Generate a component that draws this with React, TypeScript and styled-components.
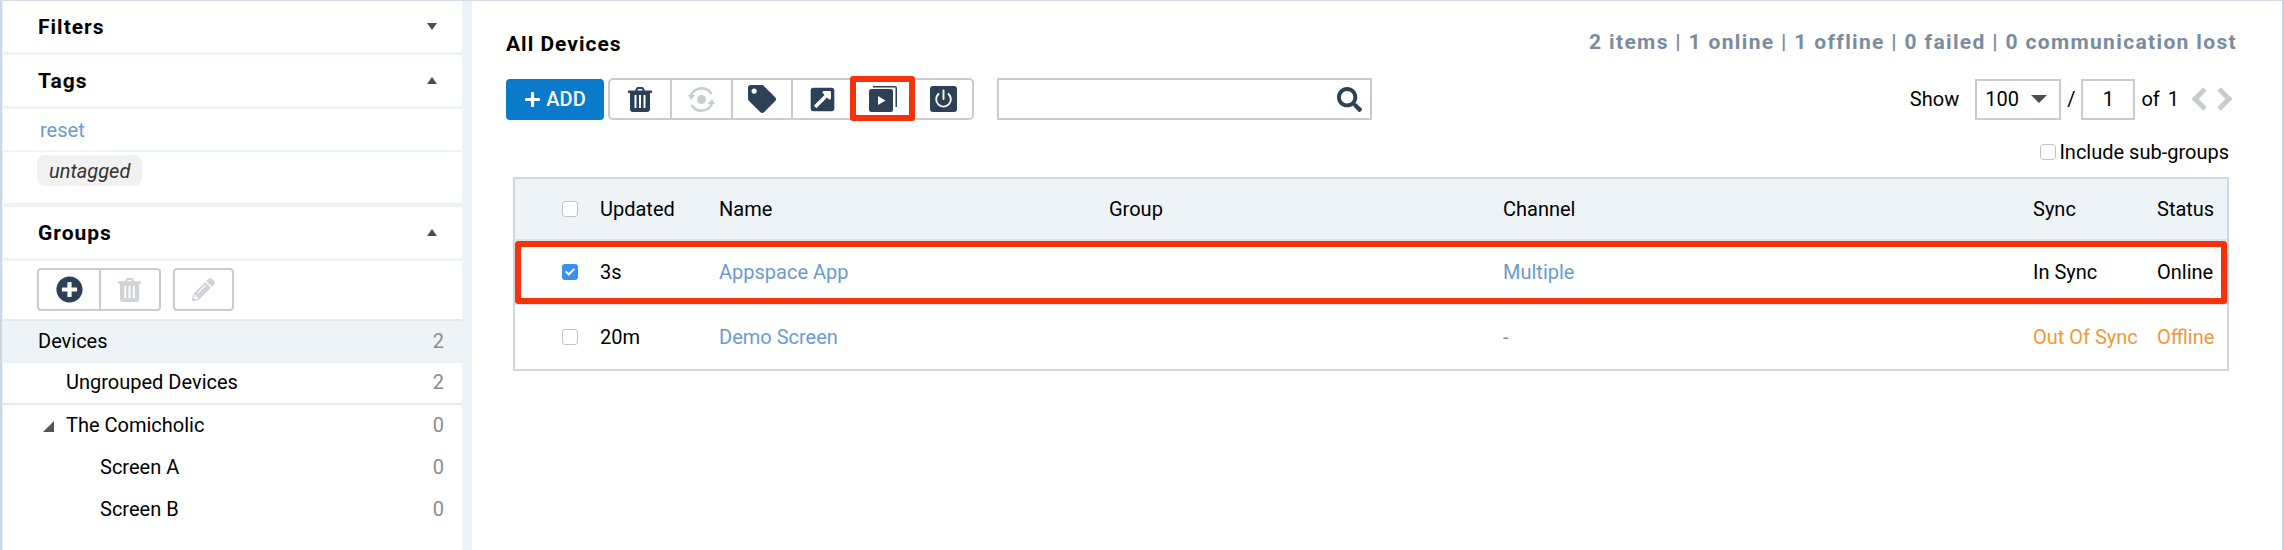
import {FaCheck, FaPlus, FaPlusCircle, FaPencilAlt, FaTag, FaSearch, FaExternalLinkSquareAlt} from "react-icons/fa";
import styled, {createGlobalStyle} from "styled-components";

const GlobalStyle = createGlobalStyle`
  html, body {
    margin: 0;
    background: #eef3f8;
    font-family: Roboto, "Liberation Sans", sans-serif;
    color: #000;
  }
  * {
    box-sizing: border-box;
  }
`;

const navy = "#2d4058";

const TrashIcon = ({size = 25, color = navy}: {size?: number; color?: string}) => (
  <svg width={size * 0.96} height={size} viewBox="0 0 24 25">
    <path
      fill={color}
      fillRule="evenodd"
      d="M8 1.5 Q8.3 0 10 0 H14 Q15.700 0 16 1.500 L16.800 3.500 H23 Q24 3.500 24 4.500 V6 H22 V22 Q22 25 19 25 H5 Q2 25 2 22 V6 H0 V4.500 Q0 3.500 1 3.500 H7.200 Z M9.500 3.500 H14.500 L14 2 H10 Z M6.500 8 H8.500 V21 H6.500 Z M11 8 H13 V21 H11 Z M15.500 8 H17.500 V21 H15.500 Z"
    />
  </svg>
);

const SyncIcon = () => (
  <svg width="27" height="27" viewBox="0 0 27 27" fill="none" stroke="#c9ccd1" strokeWidth="2.600">
    <circle cx="13.500" cy="13.500" r="4.500" fill="#c9ccd1" stroke="none" />
    <path d="M2.500 11 A11.500 11.500 0 0 1 23.500 8" />
    <path d="M24.500 16 A11.500 11.500 0 0 1 3.500 19" />
    <path d="M0 9 L7.500 9 L3 14 Z" fill="#c9ccd1" stroke="none" />
    <path d="M27 18 L19.500 18 L24 13 Z" fill="#c9ccd1" stroke="none" />
  </svg>
);

const PlayStackIcon = () => (
  <svg width="28" height="26" viewBox="0 0 28 26">
    <path d="M4 0 H26 Q28 0 28 2 V21 H26.500 V1.500 H4 Z" fill={navy} />
    <rect x="0" y="3" width="24" height="23" rx="2.500" fill={navy} />
    <path d="M9 10 L16.500 14.500 L9 19 Z" fill="#fff" />
  </svg>
);

const PowerIcon = () => (
  <svg width="27" height="26" viewBox="0 0 27 26">
    <rect width="27" height="26" rx="3" fill={navy} />
    <path d="M8.500 8 A7.300 7.300 0 1 0 18.500 8" fill="none" stroke="#fff" strokeWidth="1.900" strokeLinecap="round" />
    <path d="M13.500 4.500 V13" fill="none" stroke="#fff" strokeWidth="1.900" strokeLinecap="round" />
  </svg>
);

const Chevron = ({flip}: {flip?: boolean}) => (
  <svg width="17" height="24" viewBox="0 0 17 24" fill="none" stroke="#c8cbce" strokeWidth="5">
    <path d={flip ? "M3 2 L13 12 L3 22" : "M14 2 L4 12 L14 22"} />
  </svg>
);

export default function App(): JSX.Element {
  return (
    <>
      <GlobalStyle />
      <Page>
        <Sidebar>
          <SectionHeader>
            Filters
            <Caret />
          </SectionHeader>
          <SectionHeader>
            Tags
            <Caret open />
          </SectionHeader>
          <ResetRow>reset</ResetRow>
          <TagsRow>
            <TagChip>untagged</TagChip>
          </TagsRow>
          <SectionHeader>
            Groups
            <Caret open />
          </SectionHeader>
          <GroupTools>
            <ButtonGroup>
              <GroupButton>
                <FaPlusCircle size={27} color={navy} />
              </GroupButton>
              <GroupButton>
                <TrashIcon size={24} color="#cfd2d6" />
              </GroupButton>
            </ButtonGroup>
            <ButtonGroup>
              <GroupButton narrow>
                <FaPencilAlt size={23} color="#cfd2d6" />
              </GroupButton>
            </ButtonGroup>
          </GroupTools>
          <TreeRow indent={35} active>
            <span>Devices</span>
            <Count>2</Count>
          </TreeRow>
          <TreeRow indent={63} divided>
            <span>Ungrouped Devices</span>
            <Count>2</Count>
          </TreeRow>
          <TreeRow indent={40}>
            <span>
              <TreeToggle />
              The Comicholic
            </span>
            <Count>0</Count>
          </TreeRow>
          <TreeRow indent={97}>
            <span>Screen A</span>
            <Count>0</Count>
          </TreeRow>
          <TreeRow indent={97}>
            <span>Screen B</span>
            <Count>0</Count>
          </TreeRow>
        </Sidebar>

        <Main>
          <TitleRow>
            <Title>All Devices</Title>
            <Stats>2 items | 1 online | 1 offline | 0 failed | 0 communication lost</Stats>
          </TitleRow>
          <ToolRow>
            <AddButton>
              <FaPlus size={17} />
              ADD
            </AddButton>
            <Toolbar>
              <ToolButton>
                <TrashIcon />
              </ToolButton>
              <ToolButton>
                <SyncIcon />
              </ToolButton>
              <ToolButton>
                <FaTag size={28} color={navy} />
              </ToolButton>
              <ToolButton>
                <FaExternalLinkSquareAlt size={27} color={navy} />
              </ToolButton>
              <ToolButton highlighted>
                <PlayStackIcon />
              </ToolButton>
              <ToolButton>
                <PowerIcon />
              </ToolButton>
            </Toolbar>
            <SearchBox>
              <FaSearch size={25} color={navy} />
            </SearchBox>
            <Pager>
              <span>Show</span>
              <PageSelect>
                100
                <Caret large />
              </PageSelect>
              <span>/</span>
              <PageInput>1</PageInput>
              <PageCount>of 1</PageCount>
              <Chevrons>
                <Chevron />
                <Chevron flip />
              </Chevrons>
            </Pager>
          </ToolRow>
          <OptionRow>
            <Check />
            Include sub-groups
          </OptionRow>
          <Table>
            <HeaderRow>
              <CheckCell>
                <Check />
              </CheckCell>
              <Cell>Updated</Cell>
              <Cell>Name</Cell>
              <Cell>Group</Cell>
              <Cell>Channel</Cell>
              <Cell>Sync</Cell>
              <Cell>Status</Cell>
            </HeaderRow>
            <DataRow highlighted>
              <CheckCell>
                <Check checked>
                  <FaCheck size={10} />
                </Check>
              </CheckCell>
              <Cell>3s</Cell>
              <Cell link>Appspace App</Cell>
              <Cell />
              <Cell link>Multiple</Cell>
              <Cell>In Sync</Cell>
              <Cell>Online</Cell>
            </DataRow>
            <DataRow>
              <CheckCell>
                <Check />
              </CheckCell>
              <Cell>20m</Cell>
              <Cell link>Demo Screen</Cell>
              <Cell />
              <Cell muted>-</Cell>
              <Cell warn>Out Of Sync</Cell>
              <Cell warn>Offline</Cell>
            </DataRow>
          </Table>
        </Main>
      </Page>
    </>
  );
}

const Page = styled.div`
  display: flex;
  gap: 10px;
  height: 550px;
  padding-left: 1px;
  border-top: 1px solid #d3dce6;
  border-left: 2px solid #cbd8e4;
  border-right: 2px solid #cbd8e4;
  overflow: hidden;
`;
const Sidebar = styled.aside`
  width: 459px;
  flex: none;
  background: #fff;
  font-size: 20px;
`;
const SectionHeader = styled.div`
  display: flex;
  align-items: center;
  justify-content: space-between;
  height: 54px;
  padding: 0 25px 0 35px;
  font-weight: 700;
  font-size: 21px;
  letter-spacing: 1px;
  border-bottom: 3px solid #eef3f8;
`;
const Caret = styled.i<{open?: boolean; large?: boolean}>`
  display: block;
  width: 0;
  height: 0;
  border-left: ${(p) => (p.large ? 8 : 5)}px solid transparent;
  border-right: ${(p) => (p.large ? 8 : 5)}px solid transparent;
  border-top: ${(p) => (p.open ? "none" : `${p.large ? 8 : 7}px solid #4d4d4d`)};
  border-bottom: ${(p) => (p.open ? "7px solid #4d4d4d" : "none")};
`;
const ResetRow = styled.div`
  display: flex;
  align-items: center;
  height: 43px;
  padding-left: 37px;
  color: #6a9bcf;
  border-bottom: 2px solid #eef3f8;
`;
const TagsRow = styled.div`
  height: 55px;
  padding: 3px 0 0 34px;
  border-bottom: 4px solid #eef3f8;
`;
const TagChip = styled.span`
  display: inline-flex;
  align-items: center;
  height: 31px;
  padding: 0 12px;
  background: #f1f1f1;
  border-radius: 8px;
  font-style: italic;
  color: #333;
`;
const GroupTools = styled.div`
  display: flex;
  gap: 12px;
  height: 60px;
  padding: 7px 0 0 34px;
  border-bottom: 2px solid #e6e9ed;
`;
const ButtonGroup = styled.div`
  display: flex;
  height: 43px;
  border: 2px solid #cbcbcb;
  border-radius: 4px;
`;
const GroupButton = styled.div<{narrow?: boolean}>`
  display: flex;
  align-items: center;
  justify-content: center;
  width: ${(p) => (p.narrow ? 57 : 60)}px;

  & + & {
    border-left: 2px solid #cbcbcb;
  }
`;
const TreeRow = styled.div<{indent: number; active?: boolean; divided?: boolean}>`
  display: flex;
  align-items: center;
  justify-content: space-between;
  height: 42px;
  padding: 0 18px 2px ${(p) => p.indent}px;
  background: ${(p) => (p.active ? "#eef3f8" : "#fff")};
  border-bottom: ${(p) => (p.divided ? "2px solid #e6e9ed" : "none")};
`;
const TreeToggle = styled.i`
  display: inline-block;
  width: 0;
  height: 0;
  margin-right: 12px;
  border-left: 11px solid transparent;
  border-bottom: 11px solid #555;
`;
const Count = styled.span`
  color: #8c8c8c;
`;
const Main = styled.main`
  flex: 1;
  background: #fff;
  padding: 0 46px 0 34px;
  font-size: 20px;
`;
const TitleRow = styled.div`
  display: flex;
  align-items: center;
  justify-content: space-between;
  height: 77px;
  padding-top: 8px;
`;
const Title = styled.h1`
  margin: 0;
  font-size: 21px;
  font-weight: 700;
  letter-spacing: 1px;
`;
const Stats = styled.div`
  margin: -4px -1px 0 0;
  color: #7a8ba0;
  font-size: 21px;
  font-weight: 700;
  letter-spacing: 1.350px;
`;
const ToolRow = styled.div`
  display: flex;
  align-items: center;
`;
const AddButton = styled.button`
  display: flex;
  align-items: center;
  justify-content: center;
  gap: 5px;
  width: 98px;
  height: 41px;
  border: none;
  border-radius: 4px;
  background: #0a7acb;
  color: #fff;
  font-family: inherit;
  font-size: 20px;
  font-weight: 500;
`;
const Toolbar = styled.div`
  display: flex;
  height: 42px;
  margin-left: 4px;
  border: 2px solid #cbcbcb;
  border-radius: 5px;
`;
const ToolButton = styled.div<{highlighted?: boolean}>`
  display: flex;
  align-items: center;
  justify-content: center;
  position: relative;
  width: 60.400px;

  & + & {
    border-left: 2px solid #cbcbcb;
  }

  ${(p) =>
    p.highlighted &&
    `
    &::after {
      content: "";
      position: absolute;
      z-index: 1;
      inset: -4px -3px -3px -4px;
      border: 6px solid #f73109;
      border-radius: 3px;
    }
  `}
`;
const SearchBox = styled.div`
  display: flex;
  align-items: center;
  justify-content: flex-end;
  width: 375px;
  height: 42px;
  margin-left: 23px;
  padding-right: 8px;
  border: 2px solid #cbcbcb;
`;
const Pager = styled.div`
  display: flex;
  align-items: center;
  gap: 6px;
  margin-left: auto;
  margin-right: 3px;
`;
const PageSelect = styled.div`
  display: flex;
  align-items: center;
  justify-content: space-between;
  width: 86px;
  height: 41px;
  margin-left: 10px;
  padding: 0 12px 0 8px;
  border: 2px solid #cbcbcb;
`;
const PageInput = styled.div`
  display: flex;
  align-items: center;
  justify-content: center;
  width: 54px;
  height: 41px;
  border: 2px solid #cbcbcb;
`;
const PageCount = styled.span`
  word-spacing: 3px;
`;
const Chevrons = styled.div`
  display: flex;
  gap: 8px;
  margin-left: 6px;
`;
const OptionRow = styled.div`
  display: flex;
  align-items: center;
  justify-content: flex-end;
  gap: 3px;
  height: 26px;
  margin: 19px 7px 12px 0;
`;
const Table = styled.div`
  margin: 0 7px;
  border: 2px solid #cbd7e1;
`;
const HeaderRow = styled.div`
  display: grid;
  grid-template-columns: 85px 119px 390px 394px 530px 124px 1fr;
  align-items: center;
  height: 60px;
  background: #eef3f8;
`;
const DataRow = styled.div<{highlighted?: boolean}>`
  display: grid;
  grid-template-columns: 85px 119px 390px 394px 530px 124px 1fr;
  align-items: center;
  position: relative;
  height: 65px;

  ${(p) =>
    p.highlighted &&
    `
    box-shadow: inset 0 2px 0 #dde3e8, 0 1px 0 #dde3e8;

    &::after {
      content: "";
      position: absolute;
      inset: 2px 0 0 0;
      border: 6px solid #f73109;
      border-radius: 3px;
    }
  `}
`;
const CheckCell = styled.div`
  display: flex;
  padding-left: 47px;
`;
const Cell = styled.div<{link?: boolean; warn?: boolean; muted?: boolean}>`
  white-space: nowrap;
  color: ${(p) => (p.link ? "#6a9bcf" : p.warn ? "#f0983a" : p.muted ? "#8c8c8c" : "#000")};
`;
const Check = styled.span<{checked?: boolean}>`
  display: inline-flex;
  align-items: center;
  justify-content: center;
  width: 16px;
  height: 16px;
  border: ${(p) => (p.checked ? "none" : "1px solid #c4c4c4")};
  border-radius: 3px;
  background: ${(p) => (p.checked ? "#3b8fee" : "#fff")};
  color: #fff;
`;
